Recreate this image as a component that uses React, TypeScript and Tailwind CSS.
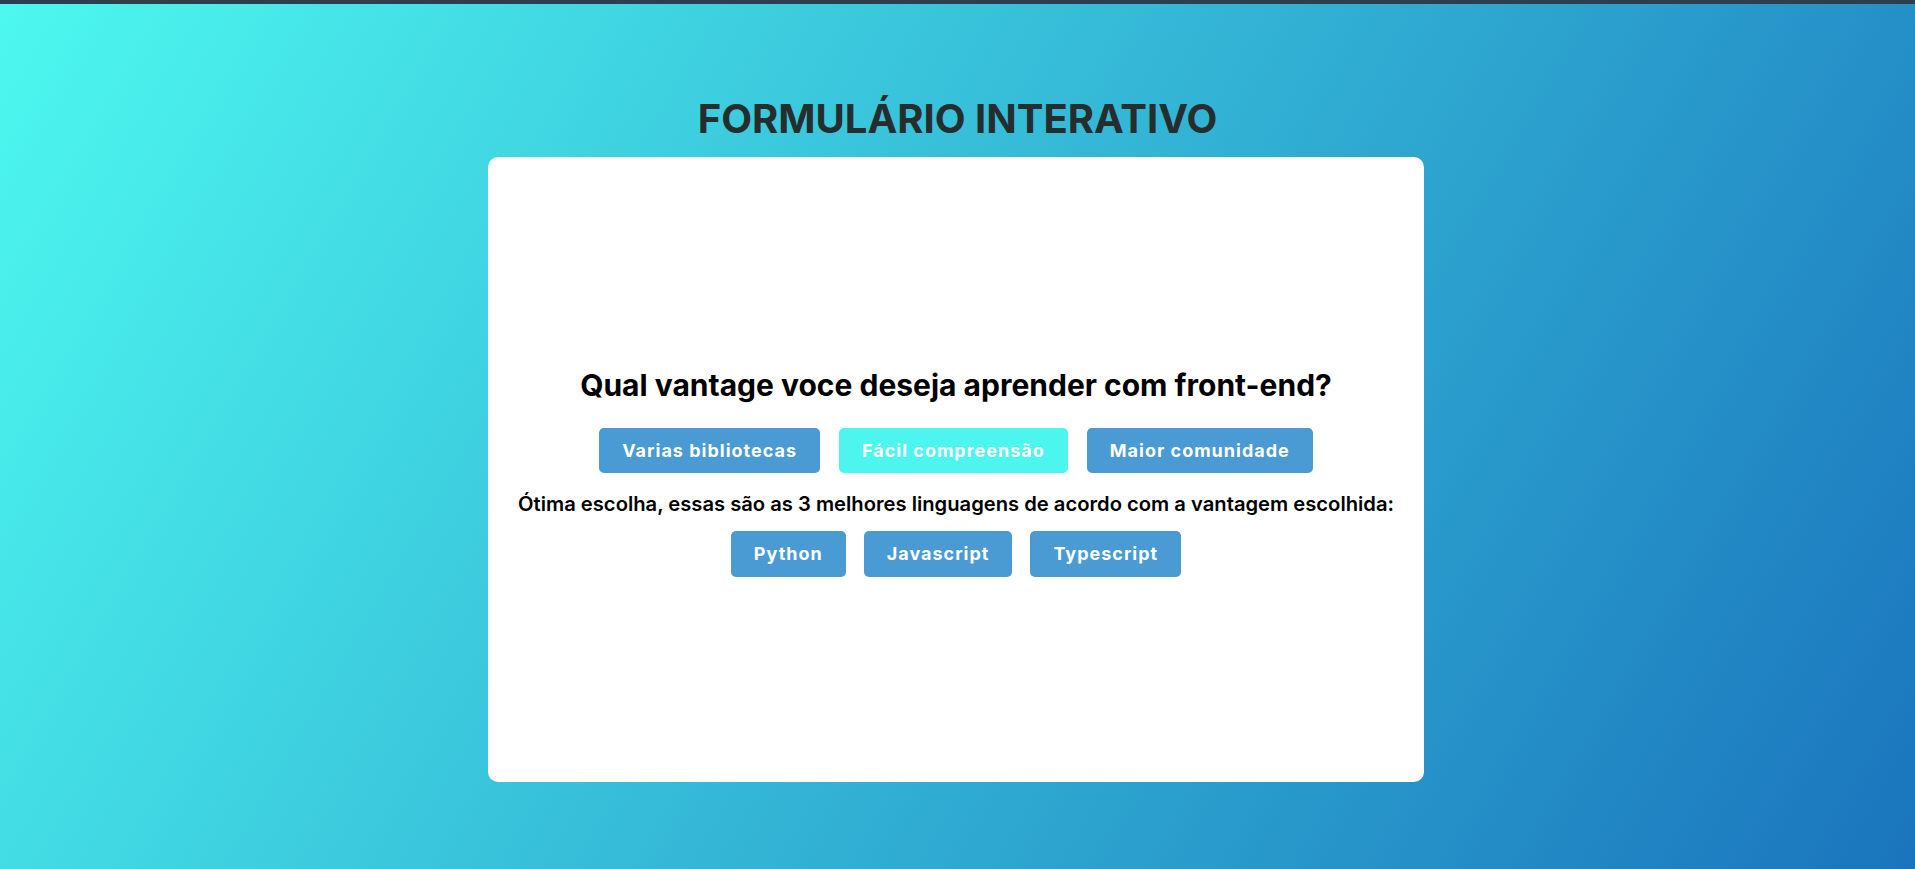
import React, { useState } from "react";

const vantagens = ["Varias bibliotecas", "Fácil compreensão", "Maior comunidade"];
const linguagens = ["Python", "Javascript", "Typescript"];

const App = () => {
  const [escolha, setEscolha] = useState(1);

  return (
    <div
      className="min-h-[869px] w-full border-t-4 border-[#2f3e4f] bg-[linear-gradient(120deg,#4df8ef,#1a74bd)] flex flex-col items-center"
      style={{ fontFamily: "Inter, 'Noto Sans', sans-serif" }}
    >
      <h1 className="mt-[91px] text-[40px] leading-[48px] font-bold text-[#262d2d]">
        FORMULÁRIO INTERATIVO
      </h1>
      <div className="mt-[14px] mr-[3px] w-[936px] h-[625px] pt-[4px] bg-white rounded-[10px] flex flex-col items-center justify-center">
        <h2 className="text-[30px] leading-[36px] font-bold text-black">
          Qual vantage voce deseja aprender com front-end?
        </h2>
        <div className="mt-[25px] flex gap-[19px]">
          {vantagens.map((v, i) => (
            <button
              key={v}
              onClick={() => setEscolha(i)}
              className={`h-[45px] px-[23px] rounded-[5px] text-white text-[18px] font-bold tracking-[1px] ${
                escolha === i ? "bg-[#4cf5ed]" : "bg-[#4a9ad4]"
              }`}
            >
              {v}
            </button>
          ))}
        </div>
        <p className="mt-[17px] text-[20.2px] leading-[28px] font-semibold text-black">
          Ótima escolha, essas são as 3 melhores linguagens de acordo com a vantagem escolhida:
        </p>
        <div className="mt-[13px] flex gap-[18px]">
          {linguagens.map((l) => (
            <button
              key={l}
              className="h-[46px] px-[23px] rounded-[5px] bg-[#4a9ad4] text-white text-[18px] font-bold tracking-[1px]"
            >
              {l}
            </button>
          ))}
        </div>
      </div>
    </div>
  );
};

export default App;
